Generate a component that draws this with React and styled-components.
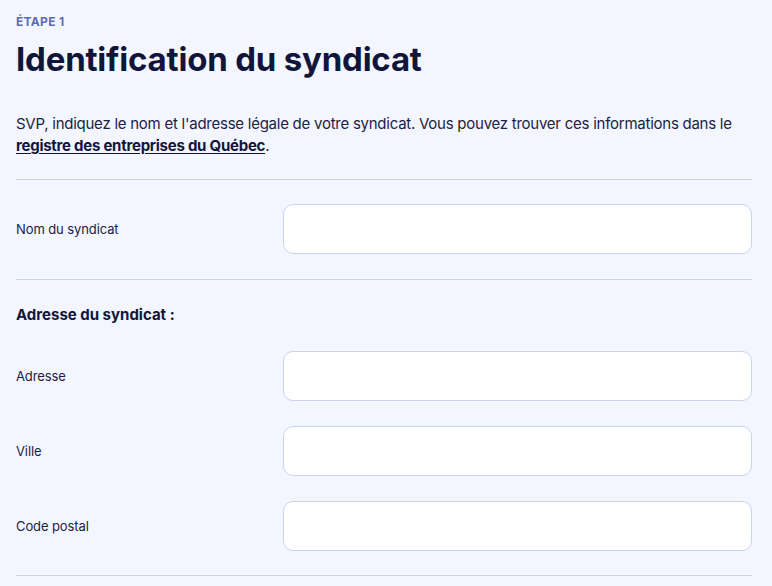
import React from 'react'
import styled, { createGlobalStyle } from 'styled-components'

const GlobalStyle = createGlobalStyle`
  html, body {
    margin: 0;
    padding: 0;
    background: #f3f6fe;
  }
  body {
    font-family: Inter, "Liberation Sans", sans-serif;
    color: #161a3d;
  }
  * { box-sizing: border-box; }
`

const Page = styled.main`
  padding: 14px 20px 0 16px;
`

const Eyebrow = styled.div`
  font-size: 12px;
  font-weight: 700;
  color: #5a6db3;
  letter-spacing: 0.3px;
  line-height: 16px;
`

const Title = styled.h1`
  margin: 8px 0 0;
  font-size: 33px;
  line-height: 42px;
  font-weight: 700;
  color: #12153a;
  letter-spacing: -0.2px;
`

const Intro = styled.p`
  margin: 33px 0 0;
  font-size: 15px;
  line-height: 22px;
  color: #1d2145;
  letter-spacing: -0.25px;

  a {
    color: #12153a;
    font-weight: 700;
    text-decoration: underline;
    text-underline-offset: 2px;
  }
`

const Divider = styled.hr`
  border: 0;
  border-top: 1px solid #c9d3ef;
  margin: ${({ $top }) => $top}px 0 0;
`

const Section = styled.section`
  display: flex;
  flex-direction: column;
  gap: 25px;
  padding: ${({ $pad }) => $pad};
`

const Row = styled.div`
  display: grid;
  grid-template-columns: 267px 1fr;
  align-items: center;
`

const Label = styled.label`
  font-size: 13px;
  color: #1d2145;
  letter-spacing: -0.1px;
`

const Input = styled.input`
  height: 50px;
  width: 100%;
  border: 1px solid #c9d3ef;
  border-radius: 10px;
  background: #fff;
  padding: 0 14px;
  font: inherit;
  outline: none;
`

const Subheading = styled.h2`
  margin: 0 0 1px;
  font-size: 15px;
  line-height: 20px;
  font-weight: 700;
  color: #12153a;
  letter-spacing: 0;
`

const addressFields = [
  { id: 'adresse', label: 'Adresse' },
  { id: 'ville', label: 'Ville' },
  { id: 'cp', label: 'Code postal' },
]

export default function App() {
  return (
    <>
      <GlobalStyle />
      <Page>
        <Eyebrow>ÉTAPE 1</Eyebrow>
        <Title>Identification du syndicat</Title>
        <Intro>
          SVP, indiquez le nom et l'adresse légale de votre syndicat. Vous pouvez trouver ces
          informations dans le <a href="#">registre des entreprises du Québec</a>.
        </Intro>
        <Divider $top={22} />
        <Section $pad="24px 0 25px">
          <Row>
            <Label htmlFor="nom">Nom du syndicat</Label>
            <Input id="nom" />
          </Row>
        </Section>
        <Divider $top={0} />
        <Section $pad="25px 0 24px">
          <Subheading>Adresse du syndicat :</Subheading>
          {addressFields.map(f => (
            <Row key={f.id}>
              <Label htmlFor={f.id}>{f.label}</Label>
              <Input id={f.id} />
            </Row>
          ))}
        </Section>
        <Divider $top={0} />
      </Page>
    </>
  )
}
